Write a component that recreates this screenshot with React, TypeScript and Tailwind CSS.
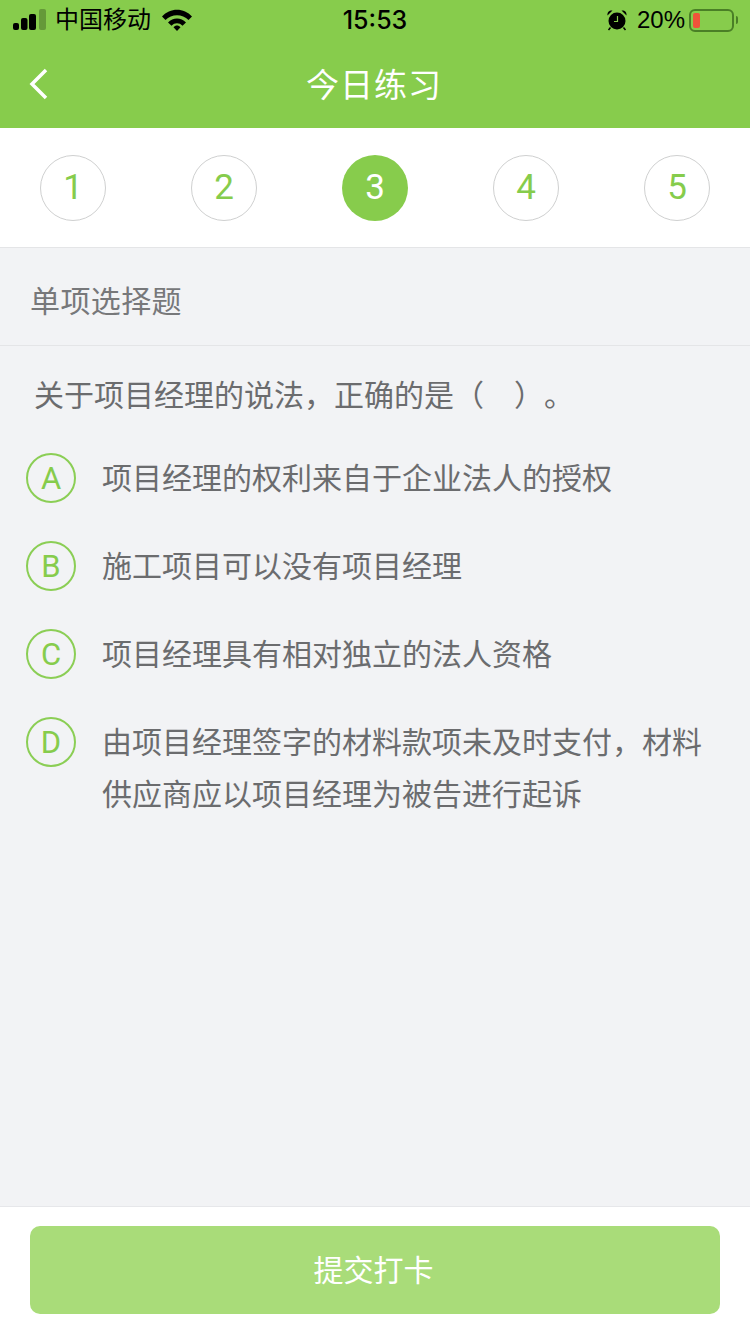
const font = "font-['Liberation_Sans','Noto_Sans_CJK_SC',sans-serif]";
const digitFont = "font-['Roboto','Liberation_Sans',sans-serif] font-normal";

const steps = [1, 2, 3, 4, 5];

const options = [
  { key: "A", text: "项目经理的权利来自于企业法人的授权" },
  { key: "B", text: "施工项目可以没有项目经理" },
  { key: "C", text: "项目经理具有相对独立的法人资格" },
  { key: "D", text: "由项目经理签字的材料款项未及时支付，材料供应商应以项目经理为被告进行起诉" },
];

function StatusBar() {
  return (
    <div className="relative h-10 flex items-center justify-between pl-[13px] pr-[12px] text-black">
      <div className="flex items-center w-[200px]">
        {/* signal */}
        <svg width="34" height="22" viewBox="0 0 34 22" className="mr-[8px]">
          <rect x="0" y="14" width="6" height="7" rx="2" fill="#000" />
          <rect x="8" y="9" width="6.500" height="12" rx="2" fill="#000" />
          <rect x="16" y="5" width="7" height="16" rx="2" fill="#000" />
          <rect x="26" y="0" width="7" height="21" rx="2" fill="#000" fillOpacity="0.25" />
        </svg>
        <span className="text-[24px] leading-none pb-[1px]">中国移动</span>
        <svg width="30" height="22" viewBox="0 0 30 22" className="ml-[11px]">
          <path d="M0 7.500C8 -1.500 22 -1.500 30 7.500L26.500 11C20.500 4.500 9.500 4.500 3.500 11Z" fill="#000" />
          <path d="M6 13.500C11 8 19 8 24 13.500L20.500 16.800C17.500 13.500 12.500 13.500 9.500 16.800Z" fill="#000" />
          <path d="M11.500 18.200C13.500 16 16.500 16 18.500 18.200L15 22Z" fill="#000" />
        </svg>
      </div>
      <span className="absolute left-0 right-0 text-center text-[25px] leading-none font-medium font-['Inter','Liberation_Sans',sans-serif] pointer-events-none">
        15:53
      </span>
      <div className="flex items-center">
        {/* alarm clock */}
        <svg width="22" height="22" viewBox="0 0 22 22" className="mr-[9px]">
          <circle cx="11" cy="12" r="8.500" fill="#000" />
          <path d="M1.500 6.500C1 3 3.500 1 6.500 1.500ZM20.500 6.500C21 3 18.500 1 15.500 1.500Z" fill="#000" />
          <path d="M4.500 18.500L2.500 21M17.500 18.500L19.500 21" stroke="#000" strokeWidth="1.500" />
          <path d="M11.500 7V12.500H8" stroke="#86cc4c" strokeWidth="1.200" fill="none" />
        </svg>
        <span className="text-[24px] leading-none">20%</span>
        {/* battery */}
        <div className="ml-[4px] w-[45px] h-[23px] rounded-[6px] border-2 border-[#4a7f26] p-[2px] flex">
          <div className="w-[7px] rounded-[2px] bg-[#f0533a]" />
        </div>
        <div className="ml-[2px] w-[2px] h-[8px] rounded-r-full bg-[#4a7f26]" />
      </div>
    </div>
  );
}

function Option({ letter, text }: { letter: string; text: string }) {
  return (
    <div className="flex items-start pl-[26px] pr-[40px] mb-[36px] last:mb-0">
      <div className={`${digitFont} w-[50px] h-[50px] shrink-0 rounded-full border-2 border-[#8bce55] flex items-center justify-center pt-[2px] text-[31px] text-[#86cc4c]`}>
        {letter}
      </div>
      <p className="ml-[26px] text-[30px] leading-[52px] text-[#6b6c6e]">{text}</p>
    </div>
  );
}

export default function App() {
  return (
    <div className={`${font} relative w-[750px] h-[1334px] overflow-hidden flex flex-col bg-[#f2f3f5]`}>
      <header className="h-[128px] shrink-0 bg-[#87cc4c]">
        <StatusBar />
        <div className="relative h-[88px] flex items-center justify-center">
          <svg width="20" height="32" viewBox="0 0 20 32" className="absolute left-[29px] top-[28px]">
            <path d="M17 2L3 16L17 30" stroke="#fff" strokeWidth="3.500" fill="none" />
          </svg>
          <h1 className="text-[33px] font-normal text-white pt-[3px] pr-[2px] tracking-[1px]">今日练习</h1>
        </div>
      </header>

      <div className="h-[120px] shrink-0 bg-white border-b border-[#e4e5e7] flex items-center justify-between px-[40px]">
        {steps.map((n) =>
          n === 3 ? (
            <div key={n} className={`${digitFont} w-[66px] h-[66px] rounded-full bg-[#87cc4c] flex items-center justify-center pt-[2px] text-[35px] text-white`}>
              {n}
            </div>
          ) : (
            <div key={n} className={`${digitFont} w-[66px] h-[66px] rounded-full border border-[#cfd0d0] flex items-center justify-center pt-[2px] text-[35px] text-[#86cc4c]`}>
              {n}
            </div>
          ),
        )}
      </div>

      <div className="h-[98px] shrink-0 border-b border-[#e4e5e7] flex items-center pl-[30px] pt-[10px] text-[30px] tracking-[0.4px] text-[#77787a]">
        单项选择题
      </div>

      <main className="flex-1">
        <p className="pl-[34px] pt-[25px] text-[30px] leading-[50px] text-[#6b6c6e]">
          关于项目经理的说法，正确的是（&emsp;）<span className="ml-[15px]">。</span>
        </p>
        <div className="mt-[32px]">
          {options.map((o) => (
            <Option key={o.key} letter={o.key} text={o.text} />
          ))}
        </div>
      </main>

      <footer className="h-[128px] shrink-0 bg-white border-t border-[#e6e7ea] px-[30px] pt-[19px]">
        <button className="w-full h-[88px] rounded-[10px] bg-[#a9dc79] text-[30px] pr-[3px] text-white">提交打卡</button>
      </footer>
    </div>
  );
}
